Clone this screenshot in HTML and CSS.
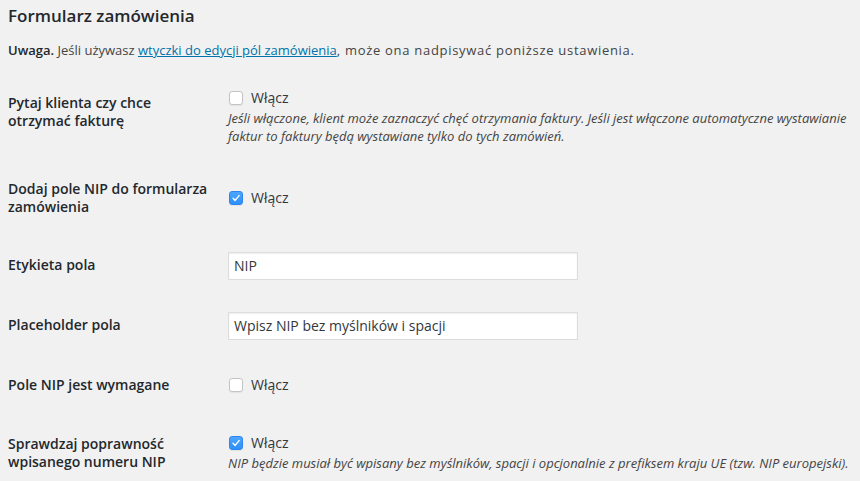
FILE: index.html
```html
<!DOCTYPE html>
<html lang="pl">
<head>
<meta charset="utf-8">
<title>Formularz zamówienia</title>
<link rel="stylesheet" href="styles.css">
</head>
<body>
<div class="wrap">
  <h2 class="title">Formularz zamówienia</h2>
  <p class="notice"><strong>Uwaga.</strong> Jeśli używasz <a href="#">wtyczki do edycji pól zamówienia</a><span class="tail">, może ona nadpisywać poniższe ustawienia.</span></p>

  <div class="form-table">
    <div class="row">
      <div class="th">Pytaj klienta czy chce otrzymać fakturę</div>
      <div class="td">
        <label class="check"><span class="box"></span>Włącz</label>
        <p class="description">Jeśli włączone, klient może zaznaczyć chęć otrzymania faktury. Jeśli jest włączone automatyczne wystawianie faktur to faktury będą wystawiane tylko do tych zamówień.</p>
      </div>
    </div>

    <div class="row">
      <div class="th">Dodaj pole NIP do formularza zamówienia</div>
      <div class="td">
        <label class="check"><span class="box checked"><svg viewBox="0 0 14 14" width="14" height="14"><path d="M3.6 7.4 L6 9.8 L10.6 4.2" fill="none" stroke="#fff" stroke-width="1.7" stroke-linecap="round" stroke-linejoin="round"/></svg></span>Włącz</label>
      </div>
    </div>

    <div class="row">
      <div class="th">Etykieta pola</div>
      <div class="td">
        <div class="input">NIP</div>
      </div>
    </div>

    <div class="row">
      <div class="th">Placeholder pola</div>
      <div class="td">
        <div class="input">Wpisz NIP bez myślników i spacji</div>
      </div>
    </div>

    <div class="row">
      <div class="th">Pole NIP jest wymagane</div>
      <div class="td">
        <label class="check"><span class="box"></span>Włącz</label>
      </div>
    </div>

    <div class="row">
      <div class="th">Sprawdzaj poprawność wpisanego numeru NIP</div>
      <div class="td">
        <label class="check"><span class="box checked"><svg viewBox="0 0 14 14" width="14" height="14"><path d="M3.6 7.4 L6 9.8 L10.6 4.2" fill="none" stroke="#fff" stroke-width="1.7" stroke-linecap="round" stroke-linejoin="round"/></svg></span>Włącz</label>
        <p class="description">NIP będzie musiał być wpisany bez myślników, spacji i opcjonalnie z prefiksem kraju UE (tzw. NIP europejski).</p>
      </div>
    </div>
  </div>
</div>
</body>
</html>
```

FILE: styles.css
```css
html, body {
  margin: 0;
  padding: 0;
  background: #f1f1f1;
}

body {
  font-family: "Open Sans", "Liberation Sans", sans-serif;
  font-size: 13px;
  color: #23282d;
  overflow: hidden;
}

.wrap {
  padding: 0 0 0 8px;
}

.title {
  font-size: 17px;
  font-weight: 600;
  line-height: 26px;
  margin: 3px 0 0;
  color: #23282d;
}

.notice {
  margin: 12px 0 0;
  line-height: 18px;
  font-size: 13px;
  color: #444;
}

.notice strong {
  color: #23282d;
  font-weight: 600;
}

.notice a {
  color: #0073aa;
  text-decoration: underline;
}

.notice .tail {
  letter-spacing: 0.7px;
}

.form-table {
  margin-top: 15px;
}

.row {
  display: grid;
  grid-template-columns: 210px 1fr;
}

.th {
  padding: 20px 10px 20px 0;
  font-size: 14px;
  font-weight: 600;
  line-height: 1.3;
  color: #23282d;
  align-self: start;
}

.td {
  padding: 15px 10px 15px 10px;
  align-self: center;
  font-size: 14px;
  color: #32373c;
}

.check {
  display: flex;
  align-items: center;
  line-height: 18px;
  height: 18px;
  color: #32373c;
}

.box {
  box-sizing: border-box;
  width: 14px;
  height: 14px;
  margin: 0 8px 0 1px;
  border: 1px solid #c4c4c4;
  border-radius: 3px;
  background: #fff;
  box-shadow: 0 1px 1px rgba(0, 0, 0, 0.06);
  display: flex;
  align-items: center;
  justify-content: center;
}

.box.checked {
  background: linear-gradient(#4ea6fd, #2d8ff9);
  border-color: #2d86ee;
}

.box svg {
  display: block;
}

.description {
  margin: 2px 0 0;
  font-size: 13px;
  font-style: italic;
  line-height: 18px;
  color: #444;
}

.input {
  box-sizing: border-box;
  width: 350px;
  height: 28px;
  margin: 1px 0;
  padding: 0 5px;
  background: #fff;
  border: 1px solid #ddd;
  box-shadow: inset 0 1px 2px rgba(0, 0, 0, 0.07);
  font-size: 14px;
  line-height: 26px;
  color: #32373c;
}
```
